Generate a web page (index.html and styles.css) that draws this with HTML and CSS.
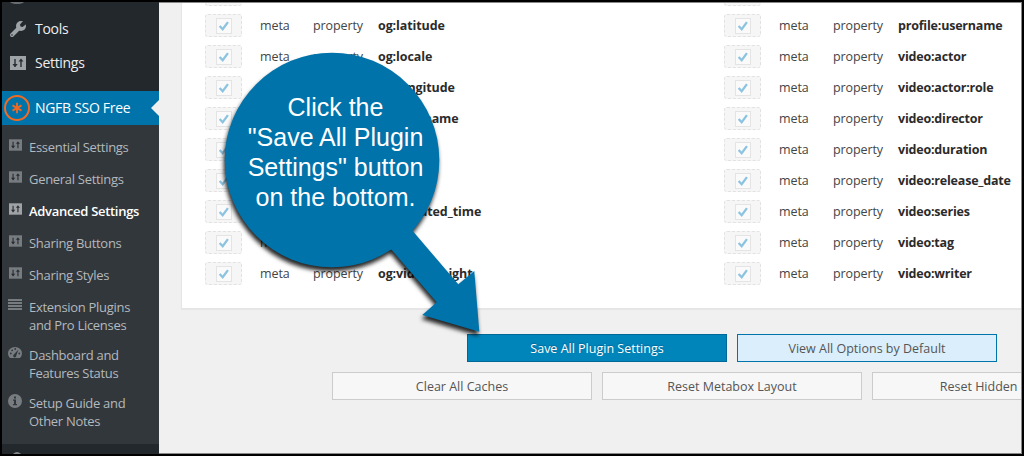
FILE: index.html
```html
<!DOCTYPE html>
<html lang="en">
<head>
    <meta charset="UTF-8">
    <title>NGFB SSO Free</title>
    <link rel="stylesheet" href="styles.css">
</head>
<body>
    <svg class="symbols" width="0" height="0">
        <symbol id="sliders" viewBox="0 0 16 14">
            <path fill="currentColor" d="M0 0h16v14H0z"/>
            <path fill="#2a2e33" d="M4.300 3h1.400v5h2L5.700 10.500V11H4.300v-.5L2.500 8h1.800zM10.300 11V5.500H8.500L11 2.500l2.500 3h-1.800V11z"/>
        </symbol>
        <symbol id="check" viewBox="0 0 16 16">
            <path fill="none" stroke="#8cc3e0" stroke-width="2.600" d="M3 8l3.500 3.700L12.500 3.500"/>
        </symbol>
    </svg>

    <div class="screen">
        <ul class="menu">
            <li class="menu-cut"><svg width="14" height="2" viewBox="0 0 14 2"><path fill="#686c70" d="M0 0h14Q12 2 7 2T0 0z"/></svg></li>
            <li class="menu-item">
                <svg class="menu-icon" viewBox="0 0 18 18"><path stroke="#9ea3a8" stroke-width="4" stroke-linecap="round" d="M3 15L10 8"/><circle cx="12" cy="6" r="5" fill="#9ea3a8"/><path fill="#23282d" d="M11 4.500L15 0l3.500 3L13.500 7l-2-.5z"/><circle cx="3" cy="15" r=".8" fill="#23282d"/></svg>
                <span>Tools</span>
            </li>
            <li class="menu-item">
                <svg class="menu-icon sliders-icon"><use href="#sliders"/></svg>
                <span>Settings</span>
            </li>
            <li class="menu-item current">
                <svg class="menu-logo" viewBox="0 0 28 28"><g fill="none" stroke="#f26a21"><circle cx="14" cy="14" r="12" stroke-width="2"/><path stroke-width="1.800" d="M14 8.800v10.400M9.500 11.400l9 5.200M18.500 11.400l-9 5.200"/></g></svg>
                <span>NGFB SSO Free</span>
            </li>
        </ul>

        <ul class="submenu">
            <li><svg class="sub-icon sub-sliders"><use href="#sliders"/></svg><span>Essential Settings</span></li>
            <li><svg class="sub-icon sub-sliders"><use href="#sliders"/></svg><span>General Settings</span></li>
            <li class="active"><svg class="sub-icon sub-sliders"><use href="#sliders"/></svg><span>Advanced Settings</span></li>
            <li><svg class="sub-icon sub-sliders"><use href="#sliders"/></svg><span>Sharing Buttons</span></li>
            <li><svg class="sub-icon sub-sliders"><use href="#sliders"/></svg><span>Sharing Styles</span></li>
            <li><svg class="sub-icon" viewBox="0 0 14 14"><path fill="currentColor" d="M0 1h14v2H0zM0 4h14v2H0zM0 7h14v2H0zM0 10h14v2H0z"/></svg><span>Extension Plugins<br>and Pro Licenses</span></li>
            <li><svg class="sub-icon" viewBox="0 0 14 14"><path fill="currentColor" d="M2 12a7 6.500 0 1 1 10 0z"/><g fill="#32373c"><circle cx="2.800" cy="7.500" r=".9"/><circle cx="4.200" cy="4.300" r=".9"/><circle cx="7.200" cy="3" r=".9"/><circle cx="11.300" cy="7.500" r=".9"/><path d="M10.500 3.500L8.300 9.500a1.600 1.600 0 1 1-2.500-1z"/></g></svg><span>Dashboard and<br>Features Status</span></li>
            <li><svg class="sub-icon" viewBox="0 0 14 14"><circle cx="7" cy="7" r="7" fill="currentColor"/><path fill="#32373c" d="M6 2.500h2v2H6zM5 5.500h3v4.500h1v1.300H5V10h1V6.800H5z"/></svg><span>Setup Guide and<br>Other Notes</span></li>
        </ul>

        <div class="menu-next"><svg width="8" height="2" viewBox="0 0 8 2"><path fill="#83878b" d="M0 2Q4-2 8 2z"/></svg></div>

        <div class="content">
            <div class="postbox">
                <div class="tags" id="tags-left"></div>
                <div class="tags tags-right" id="tags-right"></div>
            </div>
            <div class="buttons">
                <a class="button primary">Save All Plugin Settings</a>
                <a class="button highlight">View All Options by Default</a>
            </div>
            <div class="buttons secondary">
                <a class="button">Clear All Caches</a>
                <a class="button">Reset Metabox Layout</a>
                <a class="button">Reset Hidden Notices</a>
            </div>
        </div>

        <div class="callout">
            <svg width="300" height="310" viewBox="0 0 300 310">
                <path fill="#0073aa" d="M140 163L162 145L238.300 234.300L254.300 221L259.300 281.700L202.300 265L216.700 252.300z"/>
                <circle cx="112" cy="110" r="107.300" fill="#0073aa"/>
            </svg>
            <p class="callout-text">Click the<br>"Save All Plugin<br>Settings" button<br>on the bottom.</p>
        </div>
    </div>

    <script src="tags.js"></script>
</body>
</html>
```

FILE: styles.css
```css
body {
    margin: 0;
    font-family: "Open Sans", "Noto Sans", sans-serif;
    font-size: 12.5px;
    color: #444;
    background-color: #000;
}
ul {
    list-style: none;
    margin: 0;
    padding: 0;
}
.symbols {
    position: absolute;
}
.screen {
    box-sizing: border-box;
    position: relative;
    display: grid;
    grid-template-columns: 157px 863px;
    grid-template-rows: 123px 319px 10px;
    width: 1024px;
    height: 456px;
    border: 2px solid #000;
    background: linear-gradient(90deg, #23282d 157px, #f0f0f0 157px);
    overflow: hidden;
}
/* thin grey edge inside the frame */
.screen::after {
    content: "";
    position: absolute;
    inset: 0 0 0 157px;
    border: 1px solid #888;
    border-left: 0;
}

/* Admin menu */
.menu {
    color: #eee;
    font-size: 14px;
}
.menu-cut {
    height: 10px;
    padding-left: 8px;
}
.menu-cut svg {
    display: block;
}
.menu-item {
    display: flex;
    align-items: center;
    height: 34px;
    line-height: 34px;
}
.menu-item span {
    letter-spacing: -0.3px;
}
.menu-icon {
    width: 18px;
    height: 18px;
    margin: 0 8px 0 7px;
    color: #9ea3a8;
}
.sliders-icon {
    width: 16px;
    height: 14px;
    margin: 0 9px 0 8px;
}
.menu-logo {
    width: 28px;
    height: 28px;
    margin: 0 4px 0 1px;
}
.current {
    position: relative;
    margin-top: 11px;
    background-color: #0073aa;
    color: #fff;
}
.current::after {
    content: "";
    position: absolute;
    right: 0;
    top: 9px;
    border: 8px solid transparent;
    border-right-color: #f0f0f0;
    border-left: 0;
}
.submenu {
    grid-column: 1;
    padding: 6px 0 9px;
    box-sizing: border-box;
    background-color: #32373c;
    color: #b4b9be;
    font-size: 13px;
    line-height: 18px;
}
.submenu li {
    box-sizing: border-box;
    display: flex;
    min-height: 32px;
    padding: 7px 0 5px 6px;
}
.submenu span {
    letter-spacing: -0.3px;
    white-space: nowrap;
}
.sub-icon {
    width: 14px;
    height: 14px;
    margin: 0 7px 0 0;
    color: #777c80;
}
.sub-sliders {
    width: 13px;
    height: 12px;
    margin: 1px 7px 0 1px;
}
.submenu .active {
    color: #fff;
    font-weight: 600;
}
.active .sub-icon {
    color: #a0a3a6;
}
.menu-next {
    grid-column: 1;
    display: flex;
    align-items: flex-end;
    padding-left: 11px;
}

/* Main area */
.content {
    grid-column: 2;
    grid-row: 1 / 4;
    overflow: hidden;
}
.postbox {
    box-sizing: border-box;
    display: flex;
    height: 307px;
    margin-left: 22px;
    padding-left: 23px;
    border: 1px solid #e5e5e5;
    border-width: 0 0 1px 1px;
    background-color: #fff;
    box-shadow: 0 1px 1px rgba(0,0,0,0.04);
}
.tags {
    flex: none;
    width: 519px;
    margin-top: -23px;
}
.tag-row {
    display: grid;
    grid-template-columns: 55px 53px 65px auto;
    align-items: center;
    height: 31px;
    letter-spacing: -0.1px;
}
.tags-right .tag-row {
    grid-template-columns: 55px 54px 65px auto;
}
.tag-row b {
    color: #2b2b2b;
}
.tags-right b {
    letter-spacing: -0.2px;
}
.check-cell {
    box-sizing: border-box;
    display: flex;
    align-items: center;
    justify-content: center;
    width: 37px;
    height: 23px;
    border: 1px dashed #e2e2e2;
    border-radius: 3px;
    background-color: #f6f6f6;
}
.check-cell svg {
    box-sizing: border-box;
    width: 16px;
    height: 16px;
    border: 1px solid #e4e4e4;
    background-color: #fafafa;
}
.buttons {
    display: flex;
    gap: 10px;
    margin: 25px 0 0 308px;
}
.secondary {
    margin: 10px 0 0 173px;
}
.button {
    box-sizing: border-box;
    flex: none;
    width: 260px;
    height: 28px;
    border: 1px solid #ccc;
    background-color: #f7f7f7;
    color: #555;
    line-height: 27px;
    text-align: center;
}
.primary {
    border-color: #006799;
    background-color: #0085ba;
    color: #fff;
    text-shadow: 0 -1px 1px #006799;
}
.highlight {
    border-color: #0073aa;
    background-color: #daeefc;
}

/* Callout balloon over the page */
.callout {
    position: absolute;
    left: 218px;
    top: 48px;
}
.callout svg {
    display: block;
    filter: drop-shadow(-1px 4px 2px rgba(0,0,0,0.85));
}
.callout-text {
    position: absolute;
    left: 0;
    top: 42px;
    width: 231px;
    margin: 0;
    color: #fff;
    font: 25px/30px "Liberation Sans", Arial, sans-serif;
    text-align: center;
    white-space: nowrap;
}
```

FILE: tags.js
```js
// the first row is scrolled out of view, only the edge of its checkbox cell shows
const left = ['', 'og:latitude', 'og:locale', 'og:longitude', 'og:site_name', 'og:title', 'og:type', 'og:updated_time', 'og:url', 'og:video:height'];
const right = ['', 'profile:username', 'video:actor', 'video:actor:role', 'video:director', 'video:duration', 'video:release_date', 'video:series', 'video:tag', 'video:writer'];

function render(id, names) {
    document.getElementById(id).innerHTML = names.map(name => `
        <div class="tag-row">
            <span class="check-cell"><svg><use href="#check"/></svg></span>
            ${name ? `<span>meta</span><span>property</span><b>${name}</b>` : ''}
        </div>`).join('');
}

render('tags-left', left);
render('tags-right', right);
```
